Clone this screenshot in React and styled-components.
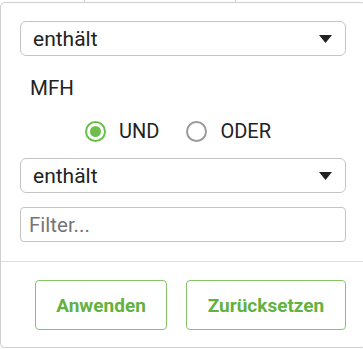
import React, { useState } from 'react';
import styled, { createGlobalStyle } from 'styled-components';

const GlobalStyle = createGlobalStyle`
  body {
    margin: 0;
    background: #ffffff;
    font-family: Roboto, "Liberation Sans", sans-serif;
    overflow: hidden;
  }
`;

const HeaderStrip = styled.div`
  display: flex;
  height: 2px;
`;

const HeaderCell = styled.div`
  width: ${(props) => props.width}px;
  border-right: 1px solid #d4d4d4;
`;

const Panel = styled.div`
  width: 366px;
  box-sizing: border-box;
  border: 1px solid #cfcfcf;
  border-radius: 5px;
  background: #ffffff;
  box-shadow: 0 1px 3px rgba(0, 0, 0, 0.08);
`;

const Body = styled.div`
  display: flex;
  flex-direction: column;
  padding: 18px 19px 19px 19px;
  border-bottom: 1px solid #dedede;
`;

const SelectBox = styled.div`
  height: 35px;
  box-sizing: border-box;
  border: 1px solid #c4c4c4;
  border-radius: 6px;
  display: flex;
  align-items: center;
  justify-content: space-between;
  padding: 0 13px 0 12px;
  margin-top: ${(props) => props.top || 0}px;
  font-size: 21px;
  color: #222222;
`;

const Caret = styled.svg`
  width: 13px;
  height: 8px;
`;

const Label = styled.div`
  margin-top: 21px;
  padding-left: 10px;
  font-size: 20.5px;
  line-height: 23px;
  color: #222222;
`;

const RadioRow = styled.div`
  display: flex;
  justify-content: center;
  align-items: center;
  gap: 27px;
  margin-top: 19px;
  height: 24px;
  padding-right: 10px;
`;

const RadioOption = styled.label`
  display: flex;
  align-items: center;
  gap: 13px;
  font-size: 20px;
  color: #222222;
  cursor: pointer;
`;

const RadioCircle = styled.span`
  width: 21px;
  height: 21px;
  box-sizing: border-box;
  border-radius: 50%;
  border: 2px solid ${(props) => (props.checked ? '#6cbf4c' : '#9a9a9a')};
  display: flex;
  align-items: center;
  justify-content: center;

  &::after {
    content: '';
    width: 11px;
    height: 11px;
    border-radius: 50%;
    background: ${(props) => (props.checked ? '#6cbf4c' : 'transparent')};
  }
`;

const FilterInput = styled.input`
  height: 35px;
  box-sizing: border-box;
  margin-top: 14px;
  border: 1px solid #c4c4c4;
  border-radius: 4px;
  padding: 0 8px;
  font-family: Roboto, "Liberation Sans", sans-serif;
  font-size: 20.5px;
  color: #222222;
  outline: none;

  &::placeholder {
    color: #757575;
  }
`;

const Footer = styled.div`
  display: flex;
  justify-content: flex-end;
  gap: 19px;
  padding: 18px 19px 17px 19px;
`;

const ActionButton = styled.button`
  height: 50px;
  width: ${(props) => props.width}px;
  background: #ffffff;
  border: 1px solid #86c46a;
  border-radius: 4px;
  color: #64b13f;
  font-family: Roboto, "Liberation Sans", sans-serif;
  font-weight: 700;
  font-size: 19px;
  padding: 0;
  cursor: pointer;
`;

function Select({ value, top }) {
  return (
    <SelectBox top={top}>
      <span>{value}</span>
      <Caret viewBox="0 0 13 8">
        <path d="M0 0 L13 0 L6.5 8 Z" fill="#222222" />
      </Caret>
    </SelectBox>
  );
}

export default function App() {
  const [mode, setMode] = useState('und');

  return (
    <>
      <GlobalStyle />
      <HeaderStrip>
        <HeaderCell width={84} />
        <HeaderCell width={150} />
      </HeaderStrip>
      <Panel>
        <Body>
          <Select value="enthält" />
          <Label>MFH</Label>
          <RadioRow>
            <RadioOption onClick={() => setMode('und')}>
              <RadioCircle checked={mode === 'und'} />
              UND
            </RadioOption>
            <RadioOption onClick={() => setMode('oder')}>
              <RadioCircle checked={mode === 'oder'} />
              ODER
            </RadioOption>
          </RadioRow>
          <Select value="enthält" top={15} />
          <FilterInput placeholder="Filter..." />
        </Body>
        <Footer>
          <ActionButton width={132}>Anwenden</ActionButton>
          <ActionButton width={160}>Zurücksetzen</ActionButton>
        </Footer>
      </Panel>
    </>
  );
}
